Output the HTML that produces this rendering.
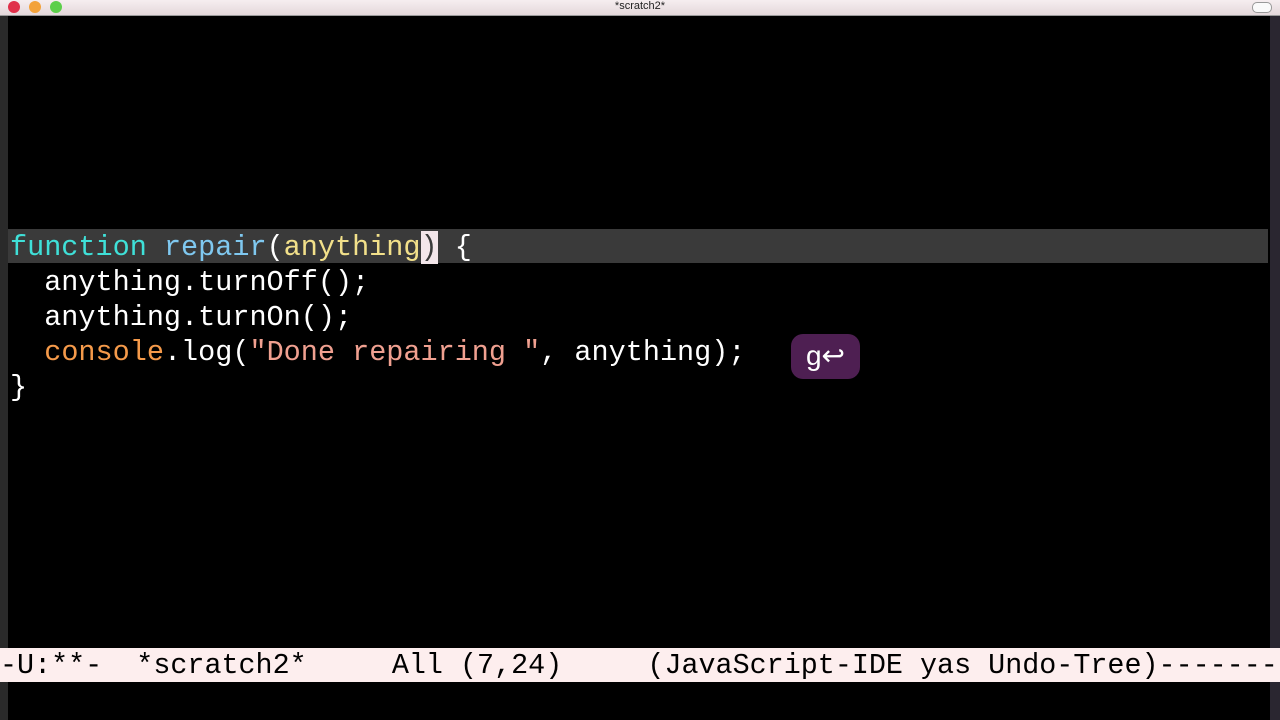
<!DOCTYPE html>
<html><head><meta charset="utf-8"><style>
body{margin:0;width:1280px;height:720px;background:#000;overflow:hidden;position:relative;font-family:"Liberation Mono",monospace}
.title{position:absolute;left:0;top:0;width:1280px;height:15px;background:linear-gradient(#f6eef0,#e4d8db);border-bottom:1px solid #9a9a9a;font:11px "Liberation Sans",sans-serif;color:#222;text-align:center;line-height:13px}
.dot{position:absolute;top:1px;width:12px;height:12px;border-radius:50%}
.lstrip{position:absolute;left:0;top:16px;width:8px;height:704px;background:#2a2a2a}
.rstrip{position:absolute;right:0;top:16px;width:10px;height:704px;background:#2a2630}
.hl{position:absolute;left:8px;top:229px;width:1260px;height:34px;background:#3a3a3a}
.code{position:absolute;left:10px;top:230px;font-size:28.5px;line-height:35px;color:#fff;white-space:pre}
.kw{color:#3fe0d8}.fn{color:#7fc8f0}.ar{color:#f2e08a}.cs{color:#f59a4a}.st{color:#f0a090}
.cur{background:#f3e6ea;color:#3a3a3a}
.mode{position:absolute;left:0;top:648px;width:1280px;height:34px;background:#fdeeee;color:#000;font-size:28.4px;line-height:36px;white-space:pre;overflow:hidden}
.key{position:absolute;left:791px;top:334px;width:69px;height:45px;border-radius:12px;background:#4e1f52;color:#fff;font:28px "Liberation Sans",sans-serif;line-height:44px;text-align:center}
</style></head><body>
<div class="title">*scratch2*
<div class="dot" style="left:8px;background:#e0304a"></div>
<div class="dot" style="left:29px;background:#f3a23a"></div>
<div class="dot" style="left:50px;background:#5ccf4a"></div>
<div style="position:absolute;right:8px;top:2px;width:18px;height:9px;border-radius:5px;border:1px solid #999;background:#fafafa"></div>
</div>
<div class="lstrip"></div><div class="rstrip"></div>
<div class="hl"></div>
<div class="code"><span class="kw">function</span> <span class="fn">repair</span>(<span class="ar">anything</span><span class="cur">)</span> {
  anything.turnOff();
  anything.turnOn();
  <span class="cs">console</span>.log(<span class="st">"Done repairing "</span>, anything);
}</div>
<div class="key">g↩</div>
<div class="mode">-U:**-  *scratch2*     All (7,24)     (JavaScript-IDE yas Undo-Tree)-------</div>
</body></html>
